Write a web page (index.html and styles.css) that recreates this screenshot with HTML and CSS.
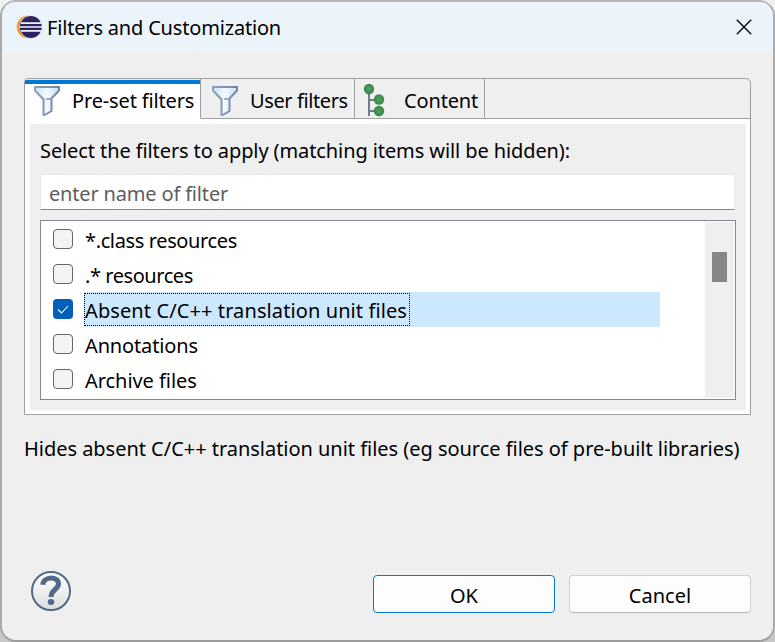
FILE: index.html
```
<!DOCTYPE html>
<html lang="en">
<head>
<meta charset="utf-8">
<title>Filters and Customization</title>
<link rel="stylesheet" href="styles.css">
</head>
<body>
<svg class="defs" width="0" height="0" aria-hidden="true">
  <defs>
    <linearGradient id="glass" x1="0" x2="1"><stop offset="0" stop-color="#c3e3f5"/><stop offset=".5" stop-color="#f3fbff"/><stop offset="1" stop-color="#bfe4fb"/></linearGradient>
    <linearGradient id="rim" x1="0" x2="1"><stop offset="0" stop-color="#949fbe"/><stop offset="1" stop-color="#7386a6"/></linearGradient>
    <linearGradient id="help" x1="0" x2="0" y1="0" y2="1"><stop offset="0" stop-color="#ffffff"/><stop offset="1" stop-color="#dedede"/></linearGradient>
    <linearGradient id="planet" x1="0" x2="0" y1="0" y2="1"><stop offset="0" stop-color="#30275c"/><stop offset="1" stop-color="#2c2065"/></linearGradient>
    <radialGradient id="leaf"><stop offset="0" stop-color="#4fa35b"/><stop offset="1" stop-color="#38864b"/></radialGradient>
    <symbol id="funnel" viewBox="0 0 28 32">
      <path d="M2 2H26V5.5L18.5 13.5V26L12 29.8H10.5V14.5L2 5.5Z" fill="url(#glass)" stroke="url(#rim)" stroke-width="2"/>
      <path d="M13 14H18" stroke="#8395b2" stroke-width="1.5"/>
    </symbol>
  </defs>
</svg>
<main class="dialog">
  <header class="titlebar">
    <svg class="logo" width="26" height="24" viewBox="0 0 26 24">
      <circle cx="12" cy="12" r="11.3" fill="#f29a32"/>
      <circle cx="15" cy="12" r="11.5" fill="#ebf4fa"/>
      <circle cx="14.8" cy="12" r="11" fill="url(#planet)"/>
      <path d="M5 8.2H25M4 12H26M5 15.8H25" stroke="#f4f4fb" stroke-width="1.7"/>
    </svg>
    <h1 class="t-title">Filters and Customization</h1>
    <svg class="close" width="16" height="16" viewBox="0 0 16 16"><path d="M.8.8 15.2 15.2M15.2.8.8 15.2" stroke="#111" stroke-width="1.5"/></svg>
  </header>
  <section class="folder">
    <nav class="tabs">
      <div class="tab active"><svg width="28" height="32"><use href="#funnel"/></svg><span class="t-preset">Pre-set filters</span></div>
      <div class="tab user"><svg width="28" height="32"><use href="#funnel"/></svg><span class="t-user">User filters</span></div>
      <div class="tab content">
        <svg class="tree" width="22" height="34" viewBox="0 0 22 34">
          <path d="M6 10V33M6 17H14M6 28H14" stroke="#737b88" stroke-width="2" fill="none"/>
          <circle cx="6" cy="6" r="5.2" fill="url(#leaf)"/><circle cx="16" cy="16.5" r="5.2" fill="url(#leaf)"/><circle cx="16" cy="28" r="5.2" fill="url(#leaf)"/>
        </svg><span class="t-content">Content</span></div>
      <div class="rest"></div>
    </nav>
    <div class="page">
      <div class="panel">
        <p class="prompt">Select the filters to apply (matching items will be hidden):</p>
        <div class="field">enter name of filter</div>
        <div class="list">
          <ul>
            <li><i class="box"></i><span class="label t-class">*.class resources</span></li>
            <li><i class="box"></i><span class="label t-dot">.* resources</span></li>
            <li class="selected"><i class="box checked"><svg width="20" height="20"><path d="M5 10.5 8.5 14 15 7" fill="none" stroke="#fff" stroke-width="1.1"/></svg></i><span class="label"><span class="focus">Absent C/C++ translation unit files</span></span></li>
            <li><i class="box"></i><span class="label">Annotations</span></li>
            <li><i class="box"></i><span class="label t-archive">Archive files</span></li>
          </ul>
          <div class="scroll"><div class="thumb"></div></div>
        </div>
      </div>
    </div>
  </section>
  <p class="desc">Hides absent C/C++ translation unit files (eg source files of pre-built libraries)</p>
  <footer class="actions">
    <svg class="help" width="40" height="40" viewBox="0 0 40 40">
      <circle cx="20" cy="20" r="19" fill="url(#help)" stroke="#536989" stroke-width="2"/>
      <path d="M11.8 13.8C12.5 5 27.5 5 27.5 12.8C27.5 18.5 20 18.5 20 26" fill="none" stroke="#536989" stroke-width="5"/>
      <ellipse cx="20" cy="31" rx="3.3" ry="3" fill="#536989"/>
    </svg>
    <button class="ok">OK</button>
    <button>Cancel</button>
  </footer>
</main>
</body>
</html>
```
FILE: styles.css
```
* { box-sizing: border-box; }
body { margin: 0; background: linear-gradient(#f0f0f0, #c8c8c8); font: 20px/28px "Noto Sans", "Open Sans", sans-serif; color: #000; white-space: nowrap; }
h1, p, ul { margin: 0; padding: 0; font: inherit; }
ul { list-style: none; }
svg { display: block; flex: none; }
.defs { position: absolute; }
.dialog { width: 775px; height: 642px; border: 2px solid #a9a9a9; border-top-color: #b5b5b5; border-bottom-color: #9c9c9c; border-radius: 16px; background: #efefef; overflow: hidden; display: flex; flex-direction: column; }
.titlebar { height: 50px; flex: none; display: flex; align-items: center; padding: 0 21px 0 14px; background: #ebf4fa; }
.titlebar h1 { margin-left: 5px; flex: 1; padding-top: 2px; }
.folder { margin: 26px 22px 0; width: 727px; height: 337px; flex: none; border: 1px solid #a0a0a0; border-top-right-radius: 5px; border-top-left-radius: 4px; display: flex; flex-direction: column; }
.tabs { display: flex; height: 40px; flex: none; }
.tab { display: flex; align-items: center; border-right: 1px solid #a0a0a0; border-bottom: 1px solid #a0a0a0; padding-top: 4px; }
.tab.active { width: 176px; padding-left: 8px; background: linear-gradient(#efefef 1px, #0078d7 1px, #0078d7 5px, #fff 5px); border-bottom-color: #fff; gap: 11px; border-top-left-radius: 3px; }
.tab.user { width: 154px; padding-left: 10px; gap: 11px; }
.tab.content { width: 130px; padding-left: 8px; gap: 19px; }
.tree { margin-bottom: 2px; }
.rest { flex: 1; border-bottom: 1px solid #a0a0a0; }
.page { flex: 1; background: #fff; padding: 5px 4px 4px 5px; }
.panel { height: 100%; background: #efefef; padding: 13px 10px 10px; }
.prompt { height: 37px; letter-spacing: -.1px; }
.field { width: 695px; height: 36px; background: #fff; border: 1px solid #e8e8e8; border-bottom-color: #868686; padding: 5px 8px; color: #5d5d5d; letter-spacing: -.17px; }
.list { margin-top: 10px; width: 696px; height: 180px; background: #fff; border: 1px solid #828790; padding: 1px; display: flex; justify-content: space-between; }
.list ul { width: 618px; }
.list li { height: 35px; display: flex; padding-left: 11px; gap: 11px; }
.box { width: 20px; height: 20px; margin-top: 7px; flex: none; border: 1px solid #666; border-radius: 4px; background: #f3f3f3; }
.box.checked { background: #005fb8; border: 0; }
.label { flex: 1; height: 35px; padding: 5px 1px; border-radius: 2px; letter-spacing: -.14px; }
.selected .label { background: #cce8ff; padding: 1px 0; }
.focus { display: block; width: 326px; height: 33px; padding: 3px 0; border: 1px dotted #000; letter-spacing: .1px; }
.scroll { width: 29px; height: 176px; background: #efefef; padding: 30px 7px; }
.thumb { width: 15px; height: 30px; background: #868686; }
.desc { margin: 20px 22px 0; letter-spacing: -.03px; }
.actions { margin: auto 22px 27px 29px; display: flex; align-items: flex-end; gap: 14px; }
.help { margin: 0 auto 2px 0; }
button { width: 182px; height: 38px; border: 1px solid #d0d0d0; border-bottom-color: #b9b9b9; border-radius: 4px; background: #fdfdfd; font: inherit; color: #000; padding: 3px 0 0; }
button.ok { border-color: #0078d4; }
.t-title { letter-spacing: -.18px; }
.t-preset { letter-spacing: -.15px; }
.t-user { letter-spacing: -.4px; }
.t-content { letter-spacing: -.15px; }
.t-class { letter-spacing: -.37px; }
.t-dot { letter-spacing: -.44px; }
.t-archive { letter-spacing: -.05px; }
```
